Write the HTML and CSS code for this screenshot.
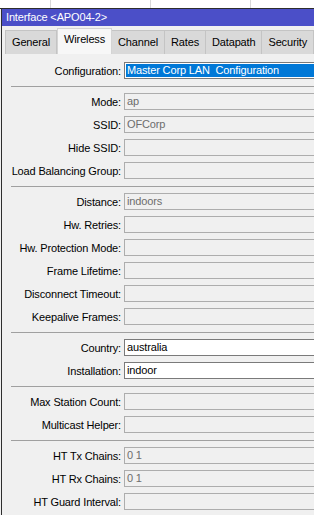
FILE: index.html
```html
<!DOCTYPE html>
<html>
<head>
<meta charset="utf-8">
<link rel="stylesheet" href="styles.css">
</head>
<body>
<div class="topstrip"><span class="cell c1"></span><span class="cell c2"></span><span class="cell c3"></span><span class="cell c4"></span></div>
<div class="window">
  <div class="title">Interface &lt;APO04-2&gt;</div>
  <div class="tabs">
    <div class="tab">General</div>
    <div class="tab active">Wireless</div>
    <div class="tab">Channel</div>
    <div class="tab">Rates</div>
    <div class="tab">Datapath</div>
    <div class="tab">Security</div>
  </div>
  <div class="panel">
    <div class="row"><span class="lbl">Configuration:</span><span class="field sel">Master Corp LAN  Configuration</span></div>
    <div class="sep"></div>
    <div class="row"><span class="lbl">Mode:</span><span class="field">ap</span></div>
    <div class="row"><span class="lbl">SSID:</span><span class="field">OFCorp</span></div>
    <div class="row"><span class="lbl">Hide SSID:</span><span class="field"></span></div>
    <div class="row"><span class="lbl">Load Balancing Group:</span><span class="field"></span></div>
    <div class="sep"></div>
    <div class="row"><span class="lbl">Distance:</span><span class="field">indoors</span></div>
    <div class="row"><span class="lbl">Hw. Retries:</span><span class="field"></span></div>
    <div class="row"><span class="lbl">Hw. Protection Mode:</span><span class="field"></span></div>
    <div class="row"><span class="lbl">Frame Lifetime:</span><span class="field"></span></div>
    <div class="row"><span class="lbl">Disconnect Timeout:</span><span class="field"></span></div>
    <div class="row"><span class="lbl">Keepalive Frames:</span><span class="field"></span></div>
    <div class="sep"></div>
    <div class="row"><span class="lbl">Country:</span><span class="field on">australia</span></div>
    <div class="row"><span class="lbl">Installation:</span><span class="field on">indoor</span></div>
    <div class="sep"></div>
    <div class="row"><span class="lbl">Max Station Count:</span><span class="field"></span></div>
    <div class="row"><span class="lbl">Multicast Helper:</span><span class="field"></span></div>
    <div class="sep"></div>
    <div class="row"><span class="lbl">HT Tx Chains:</span><span class="field">0 1</span></div>
    <div class="row"><span class="lbl">HT Rx Chains:</span><span class="field">0 1</span></div>
    <div class="row"><span class="lbl">HT Guard Interval:</span><span class="field"></span></div>
  </div>
</div>
</body>
</html>
```
FILE: styles.css
```css
html, body {
  margin: 0;
  padding: 0;
  height: 100%;
  overflow: hidden;
}
body {
  width: 314px;
  background: #f0f0f0;
  font-family: "Liberation Sans", Arial, sans-serif;
  font-size: 11px;
  letter-spacing: -0.15px;
  color: #000;
}
.topstrip {
  display: flex;
  height: 8px;
  background: #fff;
  border-bottom: 1px solid #2e2e2e;
}
.cell {
  border-right: 1px solid #d9d9d9;
}
.c1 { width: 50px; }
.c2, .c3 { width: 99px; }
.c4 { flex: 1; border-right: none; }
.window {
  margin-left: 1px;
  border-left: 1px solid #2e2e2e;
  height: 506px;
}
.title {
  height: 17px;
  line-height: 17px;
  padding-left: 4px;
  background: #4b4fc8;
  color: #fff;
  white-space: nowrap;
}
.tabs {
  display: flex;
  align-items: flex-end;
  height: 26px;
  padding: 2px 0 0 3px;
  box-sizing: border-box;
  height: 28px;
}
.tab {
  height: 23px;
  line-height: 22px;
  padding: 0 6px;
  background: #d9d9d9;
  border: 1px solid #c4c4c4;
  border-bottom: none;
  white-space: nowrap;
}
.tab + .tab { border-left: none; }
.tab.active {
  height: 25px;
  line-height: 20px;
  background: #f7f7f7;
  border-color: #d4d4d4;
  border-left: 1px solid #d4d4d4;
}
.panel {
  padding-top: 5px;
}
.row {
  display: flex;
  align-items: center;
  height: 23px;
}
.lbl {
  width: 119px;
  text-align: right;
  flex: none;
  margin-right: 3px;
  white-space: nowrap;
}
.field {
  flex: none;
  width: 200px;
  height: 15px;
  line-height: 15px;
  padding-left: 2px;
  border: 1px solid #adadad;
  background: #f0f0f0;
  color: #6d6d6d;
  white-space: pre;
}
.field.on {
  background: #fff;
  border-color: #7a7a7a;
  color: #000;
}
.field.sel {
  background: #0078d7;
  border-color: #7a7a7a;
  box-shadow: inset 0 0 0 1px #fff;
  color: #fff;
}
.sep {
  height: 1px;
  margin: 4px 0 3px 9px;
  background: #a0a0a0;
}
```
